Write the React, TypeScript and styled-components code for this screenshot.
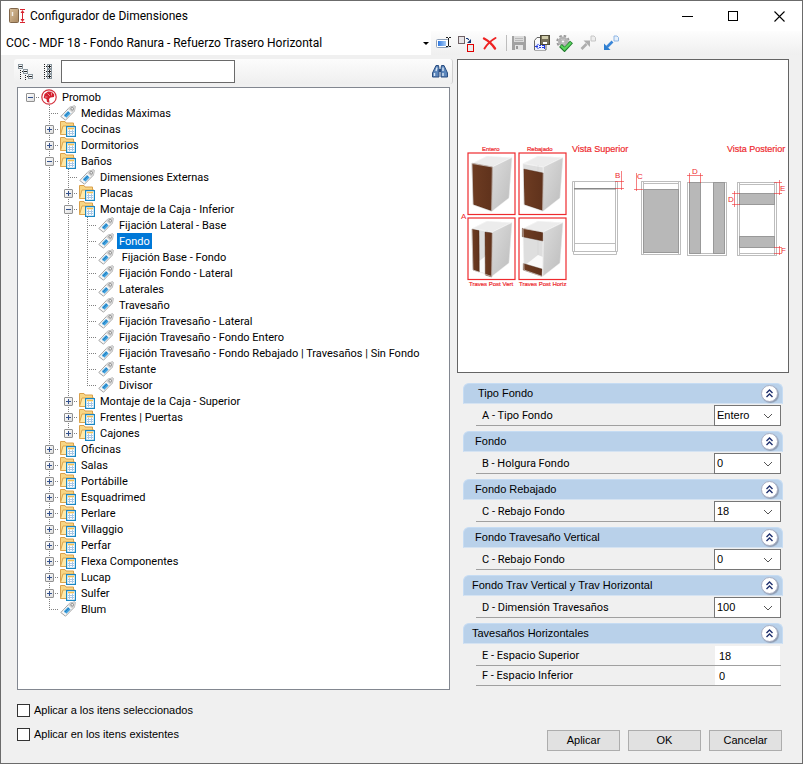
import React, { useState } from 'react';
import styled, { createGlobalStyle, css } from 'styled-components';

const GlobalStyle = createGlobalStyle`
  *, *::before, *::after { box-sizing: border-box; }
  body { margin: 0; background: #f0f0f0; }
  body, button, input, select {
    font-family: "Liberation Sans", Arial, sans-serif;
    font-size: 11px;
    color: #000;
  }
`;

const listFont = 'Roboto, "Liberation Sans", sans-serif';

/* ---------- window ---------- */

const Window = styled.div`
  display: flex;
  flex-direction: column;
  min-height: 100vh;
  border: 1px solid #6b6b6b;
  background: #f0f0f0;
`;

const TitleBar = styled.header`
  display: flex;
  align-items: center;
  height: 30px;
  padding-left: 8px;
  background: #fff;
`;

const Title = styled.h1`
  flex: 1;
  margin: 0 0 0 4px;
  font: 400 12px/20px ${listFont};
  white-space: nowrap;
`;

const CaptionButton = styled.button`
  display: grid;
  place-items: center;
  width: 46px;
  height: 30px;
  padding: 0;
  border: 0;
  background: transparent;
`;

/* ---------- toolbar ---------- */

const Toolbar = styled.div`
  display: flex;
  align-items: center;
  height: 24px;
  background: linear-gradient(#fdfdfd, #efefef);
`;

const ComboWrap = styled.div`
  display: grid;
  grid-template-columns: minmax(0, 1fr) 11px;
  align-items: center;
  flex: 0 1 430px;
  height: 24px;
  background: #fff;
  margin-right: 1px;
`;

const ModelSelect = styled.select`
  grid-area: 1 / 1 / 2 / 3;
  width: 100%;
  height: 24px;
  padding: 0 12px 0 5px;
  border: 0;
  appearance: none;
  background: transparent;
  font: 400 12px/20px ${listFont};
`;

const ComboArrow = styled.span`
  grid-area: 1 / 2;
  justify-self: center;
  border: 3px solid transparent;
  border-top-color: #000;
  border-bottom: 0;
  pointer-events: none;
`;

const ToolButton = styled.button`
  display: grid;
  place-items: center;
  flex: none;
  width: 23px;
  height: 23px;
  padding: 0;
  border: 0;
  background: transparent;
`;

const ToolSeparator = styled.span`
  width: 6px;
  height: 16px;
  border-right: 1px solid #bdbdbd;
`;

/* ---------- content ---------- */

const Content = styled.main`
  flex: 1;
  display: grid;
  grid-template-columns: minmax(0, 433fr) minmax(0, 332fr);
  column-gap: 7px;
  padding: 4px 13px 0 16px;
`;

const LeftColumn = styled.section`
  display: flex;
  flex-direction: column;
`;

const SearchStrip = styled.div`
  display: flex;
  align-items: center;
  height: 25px;
  margin: 0 -3px 3px;
  padding-right: 1px;
  border-right: 1px solid #d0d0d0;
  border-radius: 3px;
  background: linear-gradient(#fcfcfc, #efefef);
`;

const SearchInput = styled.input`
  width: 174px;
  height: 23px;
  margin: 0 auto 0 1px;
  padding: 0 4px;
  border: 1px solid #6a6a6a;
  background: #fff;
`;

const TreeBox = styled.div`
  flex: 1;
  padding: 1px 0 0 3px;
  border: 1px solid #828790;
  background: #fff;
`;

const TreeList = styled.ul`
  margin: 0;
  padding: 0;
  list-style: none;
`;

const TreeRow = styled.div`
  display: flex;
  align-items: center;
  height: 16px;
`;

type Line = 'none' | 'pass' | 'branch' | 'end' | 'root';

const dotsDown = 'repeating-linear-gradient(#808080 0 1px, transparent 1px 2px)';
const dotsAcross = 'repeating-linear-gradient(90deg, #808080 0 1px, transparent 1px 2px)';

const Guide = styled.span<{ $line: Line }>`
  display: grid;
  place-items: center;
  flex: none;
  width: 19px;
  height: 16px;
  background-repeat: no-repeat;
  ${({ $line }) => $line === 'pass' && css`
    background-image: ${dotsDown};
    background-size: 1px 16px;
    background-position: 9px 0;
  `}
  ${({ $line }) => ($line === 'branch' || $line === 'end') && css`
    background-image: ${dotsDown}, ${dotsAcross};
    background-size: 1px ${$line === 'end' ? 9 : 16}px, 11px 1px;
    background-position: 9px 0, 9px 8px;
  `}
  ${({ $line }) => $line === 'root' && css`
    background-image: ${dotsAcross};
    background-size: 10px 1px;
    background-position: 9px 8px;
  `}
`;

const Expander = styled.button`
  display: block;
  width: 9px;
  height: 9px;
  margin-top: 1px;
  padding: 0;
  border: 1px solid #919191;
  border-radius: 1px;
  background: linear-gradient(135deg, #fff, #dedede);
  svg { display: block; }
`;

const NodeIcon = styled.span`
  flex: none;
  width: 20px;
  height: 16px;
  padding-left: 1px;
  svg { display: block; }
`;

const NodeLabel = styled.span<{ $selected: boolean }>`
  padding: 2px 2px 0;
  font-family: ${listFont};
  line-height: 14px;
  white-space: pre;
  color: ${({ $selected }) => ($selected ? '#fff' : '#000')};
  background: ${({ $selected }) => ($selected ? '#0078d7' : 'transparent')};
`;

/* ---------- right side ---------- */

const Preview = styled.figure`
  margin: 0;
  border: 1px solid #646464;
  background: #fff;
  svg { display: block; width: 100%; height: auto; }
`;

const Groups = styled.div`
  display: flex;
  flex-direction: column;
  gap: 5px;
  padding: 10px 6px 0;
`;

const GroupHeader = styled.header`
  display: flex;
  align-items: center;
  justify-content: space-between;
  height: 21px;
  padding: 0 4px 0 8px;
  border: 1px solid #c6dcf3;
  border-bottom-color: #d5e3f2;
  border-radius: 6px 6px 0 0;
  background: #b9d1ea;
`;

const GroupTitle = styled.h2`
  margin: 0;
  padding-bottom: 1px;
  font-size: 11px;
  font-weight: 400;
  line-height: 16px;
  white-space: pre;
`;

const CollapseButton = styled.button<{ $closed: boolean }>`
  display: grid;
  place-items: center;
  width: 17px;
  height: 17px;
  padding: 0;
  border: 1px solid #a9afc4;
  border-radius: 50%;
  background: #fff;
  box-shadow: 1px 1px 1px #8d9bb0;
  svg { transform: ${({ $closed }) => ($closed ? 'rotate(180deg)' : 'none')}; }
`;

const GroupBody = styled.div<{ $list: boolean }>`
  padding: ${({ $list }) => ($list ? 1 : 2)}px 2px 0 13px;
`;

const Field = styled.div`
  display: flex;
  align-items: center;
  border-bottom: 1px solid #a0a0a0;
`;

const FieldLabel = styled.label`
  flex: 1;
  padding: 1px 0 0 6px;
  font-family: ${listFont};
  line-height: 18px;
`;

const FieldSelectWrap = styled.div`
  display: grid;
  grid-template-columns: 1fr 18px;
  align-items: center;
  width: 67px;
  margin-bottom: -1px;
  svg { grid-area: 1 / 2; pointer-events: none; }
`;

const FieldSelect = styled.select`
  grid-area: 1 / 1 / 2 / 3;
  width: 100%;
  height: 21px;
  padding: 0 2px 1px;
  border: 1px solid #767676;
  border-radius: 0;
  appearance: none;
  background: #fff;
`;

const FieldInput = styled.input`
  width: 65px;
  height: 19px;
  margin-right: 1px;
  padding: 0 4px;
  border: 0;
  background: #fff;
`;

/* ---------- footer ---------- */

const Footer = styled.footer`
  display: flex;
  align-items: flex-end;
  justify-content: space-between;
  padding: 8px 20px 12px 16px;
`;

const Checks = styled.div`
  padding-bottom: 5px;
`;

const CheckLabel = styled.label`
  display: flex;
  align-items: center;
  gap: 4px;
  height: 24px;
`;

const CheckBox = styled.input`
  width: 13px;
  height: 13px;
  margin: 0;
  border: 1px solid #333;
  appearance: none;
  background: #fff;
  &:checked { background: #0078d7; }
`;

const Buttons = styled.div`
  display: flex;
  gap: 8px;
`;

const DialogButton = styled.button`
  width: 73px;
  height: 21px;
  padding: 0 0 2px;
  border: 1px solid #adadad;
  background: #e1e1e1;
`;

/* ---------- icons ---------- */

const Icon = ({ children, w = 16, h = 16 }: { children: React.ReactNode; w?: number; h?: number }) => (
  <svg width={w} height={h} viewBox={`0 0 ${w} ${h}`} fill="none" aria-hidden="true">
    {children}
  </svg>
);

const AppIcon = () => (
  <Icon w={17} h={16}>
    <defs>
      <linearGradient id="door" x1="0" x2="1" y1="0" y2="1">
        <stop offset="0" stopColor="#d9c09c" />
        <stop offset="1" stopColor="#a98860" />
      </linearGradient>
    </defs>
    <rect x="0.5" y="0.5" width="9" height="14" rx="1" fill="url(#door)" stroke="#80664a" />
    <path d="M3.5 4v4" stroke="#f3efe8" strokeWidth="1.4" />
    <path d="M11 1.5h5M11 14.5h5M13.5 3v10" stroke="#d8232f" />
    <path d="M11.5 5 13.5 2l2 3zM11.5 11l2 3 2-3z" fill="#d8232f" />
  </Icon>
);

const RenameIcon = () => (
  <Icon>
    <defs>
      <linearGradient id="field" x1="0" x2="1"><stop stopColor="#2f78e0" /><stop offset="1" stopColor="#a6ccf7" /></linearGradient>
    </defs>
    <rect x="0.5" y="4.5" width="12" height="8" rx="1" fill="#fff" stroke="#8ea0b8" />
    <rect x="2" y="6" width="8" height="5" fill="url(#field)" />
    <path d="M10 2.5h2M13 2.5h2M12.5 3v8M10 11.500h2M13 11.500h2" stroke="#222" />
  </Icon>
);

const ReplaceIcon = () => (
  <Icon w={17} h={17}>
    <rect x="0.500" y="1.500" width="6" height="7" fill="#e8e6e8" stroke="#6f6165" />
    <rect x="9.500" y="9.500" width="6" height="7" fill="#ececec" stroke="#e00000" />
    <path d="M8 3.500h2v1h1" stroke="#163a78" />
    <path d="M13 4v4H9z" fill="#163a78" />
  </Icon>
);

const DeleteIcon = () => (
  <Icon>
    <path d="M2 3.500c4 2 8 5.500 11 10" stroke="#ee2222" strokeWidth="2.400" strokeLinecap="round" />
    <path d="M13.500 3C9 5.500 5 9.500 2.500 13.500" stroke="#ee2222" strokeWidth="2" strokeLinecap="round" />
  </Icon>
);

const SaveIcon = () => (
  <Icon>
    <path d="M1 1h13l1 1v13H1z" fill="#a2a2a2" />
    <rect x="3" y="1" width="10" height="6" fill="#dcdcdc" />
    <path d="M4 3.500h8M4 5.500h8" stroke="#b8b8b8" />
    <rect x="4" y="10" width="8" height="5" fill="#e4e4e4" />
    <rect x="5" y="11" width="2" height="3" fill="#999" />
  </Icon>
);

const SaveModelIcon = () => (
  <Icon>
    <path d="M.500 5.500 3 2.500h9v12.500H.500z" fill="#fafafa" stroke="#666" />
    <path d="M1 8h10v7H1z" fill="#eef1fb" />
    <rect x="6.500" y="0.500" width="9" height="9" fill="#77705a" stroke="#4c4835" />
    <rect x="8" y="1" width="6" height="3" fill="#cfcba9" />
    <rect x="9" y="7" width="4" height="2" fill="#fff" />
    <path d="M1 11.500h3M2 11.500 4.500 9M2 11.500 4.500 14M5 10.500h2M5 12.500h2M8 10.500h2M8 12.500h2M10.500 10v4" stroke="#2038e0" />
  </Icon>
);

const GearCheckIcon = () => (
  <Icon w={17} h={17}>
    <circle cx="7" cy="6.500" r="5.700" stroke="#9a9a9a" strokeWidth="2" strokeDasharray="2.500 1.976" />
    <circle cx="7" cy="6.500" r="3.600" fill="#fff" stroke="#b4b4b4" strokeWidth="2.800" />
    <circle cx="7" cy="6.500" r="1.700" fill="#fff" stroke="#8f8f8f" strokeWidth=".800" />
    <path d="m4.500 10.500 4 4L15.500 7" stroke="#1f7a2b" strokeWidth="4" />
    <path d="m5 10.800 3.500 3.300L15 7.500" stroke="#5bd45e" strokeWidth="2.200" />
  </Icon>
);

const ExportIcon = () => (
  <Icon>
    <path d="M1.500 14 6.500 9" stroke="#adadad" strokeWidth="2.600" />
    <path d="M3.500 5.500H10V12z" fill="#adadad" />
    <path d="M11 1h3l1.500 1.500V6H11z" fill="#eee" stroke="#c6c6c6" />
  </Icon>
);

const ImportIcon = () => (
  <Icon>
    <path d="M4 12 9.500 6.500" stroke="#3a86d8" strokeWidth="2.600" />
    <path d="M1 8.500V15h6.500z" fill="#2f7fd0" />
    <path d="M11 1h3l1.500 1.500V6H11z" fill="#e7f1fc" stroke="#8fb6e4" />
  </Icon>
);

const MiniBox = ({ x, y, plus }: { x: number; y: number; plus?: boolean }) => (
  <g>
    <rect x={x + 0.5} y={y + 0.5} width="4" height="4" fill="#f4f7fa" stroke="#8b979f" />
    <path d={`M${x + 1} ${y + 2.5}h3${plus ? `M${x + 2.5} ${y + 1}v3` : ''}`} stroke="#222" />
  </g>
);

const CollapseAllIcon = () => (
  <Icon>
    <path d="M2.500 6v10M7.500 11v5M4 7.500h2M9 12.500h2" stroke="#222" strokeDasharray="1 1" />
    <MiniBox x={0} y={0} />
    <MiniBox x={5} y={5} />
    <MiniBox x={10} y={10} />
  </Icon>
);

const ExpandAllIcon = () => (
  <Icon>
    <path d="M3.500 0v16M5 2.500h2M5 7.500h2M5 12.500h2" stroke="#222" strokeDasharray="1 1" />
    <MiniBox x={6} y={0} plus />
    <MiniBox x={6} y={5} plus />
    <MiniBox x={6} y={10} plus />
  </Icon>
);

const BinocularsIcon = () => (
  <Icon>
    <path d="M4 1.500h2.500l.500 3v8.500H.500V9zM12 1.500H9.500l-.500 3v8.500h6.500V9z" fill="#5c86bb" stroke="#2a4d80" />
    <path d="M7 5h2v3H7z" fill="#2a4d80" />
    <path d="M2.500 9v3M5 3.500 4 7M11 9v3M11 3.500V7" stroke="#dbe8f6" strokeWidth="1.400" />
  </Icon>
);

const PromobIcon = () => (
  <Icon>
    <circle cx="8" cy="8" r="7.200" fill="#fff" stroke="#d4303c" strokeWidth="1.200" />
    <path d="M7 2.500 3.500 5 2.700 9l2.800 1 .5 3 2.500.800L8 10l1.500-1.500L13 8l.300-2.500-2.500-2.800z" fill="#d3202f" />
    <path d="M6.500 4.500 9 7M10.500 3.500v3M4 8h2.500" stroke="#f3b9bd" strokeWidth=".700" />
  </Icon>
);

const TagIcon = () => (
  <Icon>
    <path d="M.800 11.500 9.500 2.300 14.700.800l.500.500L14.500 6 5.500 15.200z" fill="#f7f7f7" stroke="#9a9a9a" strokeWidth=".900" />
    <path d="M9.500 2.300 14.700.800l.500.500L14.500 6l-2 2L8 4z" fill="#d4d4d4" />
    <path d="M3.800 10.300 8 6l2.600 2.500-4.200 4.300z" fill="#3d9fdd" />
    <path d="m4.800 11.200 4.200-4.200" stroke="#2179b8" strokeWidth=".900" />
    <circle cx="12.200" cy="3.800" r="1.300" fill="#fff" stroke="#808080" strokeWidth=".900" />
  </Icon>
);

const FolderIcon = () => (
  <Icon>
    <path d="M.500 13.500V.500h4.500l1 1.500h7.500v4" fill="#f8d684" stroke="#d9a04c" />
    <path d="m.500 13.500 2.500-8.500H15v8.500z" fill="#ffe9a8" stroke="#dba650" />
    <rect x="6.600" y="5.600" width="8.800" height="9.800" fill="#fff" stroke="#1a87c4" strokeWidth="1.200" />
    <path d="M8 7.500h6" stroke="#f5c04f" strokeWidth="1.600" />
    <path d="M8 10.500h6M8 12.500h6M9.500 8.500V14M12.500 8.500V14" stroke="#a9c8e6" />
  </Icon>
);

const ExpanderMark = ({ open }: { open: boolean }) => (
  <Icon w={7} h={7}>
    <path d={open ? 'M1 3.500h5' : 'M1 3.500h5M3.500 1v5'} stroke="#32508c" />
  </Icon>
);

const DoubleChevron = () => (
  <Icon w={9} h={9}>
    <path d="M1.500 4 4.500 1l3 3M1.500 8 4.500 5l3 3" stroke="#1e2f6e" strokeWidth="1.400" />
  </Icon>
);

const ChevronDown = () => (
  <Icon w={10} h={6}>
    <path d="m1 1 4 4 4-4" stroke="#555" />
  </Icon>
);

/* ---------- preview drawing ---------- */

const RED = '#ee2a2e';

const Cabinet = ({ x, y, front }: { x: number; y: number; front: string[] }) => (
  <g transform={`translate(${x} ${y})`}>
    <rect width="47" height="61.500" fill="#fff" stroke={RED} strokeWidth="1.200" />
    <path d="M4 10.500 19 3l25 1.500-3 40L24 58 5 52z" fill="#dedede" />
    <path d="M19 3 44 4.500 24.300 14 4 10.500z" fill="#ececec" stroke="#fff" strokeWidth=".600" />
    <path d="m5 48 14-11 5 2v18L5 52z" fill="#fafafa" />
    <path d="M19 12v25" stroke="#cfcfcf" strokeWidth=".500" />
    <path d="M24.300 14 44 4.500l-3 40.500L23.700 58.500z" fill="url(#cabinetSide)" stroke="#f6f6f6" strokeWidth=".500" />
    {front.map((points) => (
      <polygon key={points} points={points} fill="url(#wood)" stroke="#4a2614" strokeWidth=".400" />
    ))}
    <path d="M4 10.500 24.300 14 23.700 58.500 5 52z" stroke="#eee" strokeWidth=".600" />
  </g>
);

const cabinets = [
  { x: 10, y: 93, front: ['4,10.300 24.500,14 23.700,58 5.300,51.500'] },
  { x: 61, y: 93, front: ['4.700,16 24.300,20 23.700,57.500 5.300,51.500'] },
  { x: 10, y: 158, front: ['4,11 11,12.500 11.300,54 5,52', '17,14 24.300,15 23.700,59 17.300,57'] },
  { x: 61, y: 158, front: ['3.300,10.300 24,14.500 24,23 3.300,18.700', '4.300,45.500 23,51 22.700,58.300 4.300,52'] },
];

const Drawing = () => (
  <svg viewBox="0 0 330 312" fill="none" role="img" aria-label="Vista Superior, Vista Posterior">
    <defs>
      <linearGradient id="cabinetSide" x1="0" x2="1" y1="0" y2="1"><stop stopColor="#dcdcdc" /><stop offset="1" stopColor="#bcbcbc" /></linearGradient>
      <linearGradient id="wood" x1="0" x2="1"><stop stopColor="#6e3c22" /><stop offset="1" stopColor="#5f321c" /></linearGradient>
    </defs>
    {cabinets.map((c) => <Cabinet key={`${c.x}-${c.y}`} {...c} />)}

    <g stroke="#bdbdbd">
      <path d="M114.500 121.500h45v70h-45zM116.500 122v70M157.500 122v70M116.500 183.500h41M115.500 192v2.500h43V192" />
      <path d="M116 128.700h42" stroke="#888" strokeWidth="1.600" />
      <rect x="183.500" y="121.500" width="39" height="73" />
      <path d="M185.500 122v72M220.500 122v72M185.500 123.500h35" />
      <rect x="229.500" y="122.500" width="39" height="73" />
      <path d="M231 193.500h36" />
      <rect x="279.500" y="122.500" width="39" height="73" />
      <path d="M281.500 123v72M316.500 123v72M281.500 124.500h35M281.500 193.500h35" />
    </g>
    <g fill="#b8b8b8" stroke="#999">
      <rect x="185.500" y="129.500" width="35" height="63" />
      <rect x="231.500" y="122.500" width="11" height="71" />
      <rect x="255.500" y="122.500" width="11" height="71" />
      <rect x="281.500" y="133.500" width="35" height="11" />
      <rect x="281.500" y="176.500" width="35" height="11" />
    </g>
    <path
      d="M163.500 111v19M157 121.500h9M157 128.500h9M178.500 113v18M176 129.500h9M229 115.500h16M231.500 113v10M242.500 113v10M321.500 120v15M316 122.500h8M316 133.500h8M276.500 131v16M274 133.500h8M274 144.500h8M321.500 186v9M316 187.500h8M316 193.500h8"
      stroke={RED}
      strokeWidth=".600"
    />
    <g fill={RED} stroke={RED} strokeWidth=".200" fontFamily="Liberation Sans, Arial, sans-serif" fontSize="6">
      <text x="24" y="91">Entero</text>
      <text x="69" y="91">Rebajado</text>
      <text x="11" y="226">Traves Post Vert</text>
      <text x="61" y="226">Traves Post Horiz</text>
      <g fontSize="9">
        <text x="114" y="92">Vista Superior</text>
        <text x="269" y="92">Vista Posterior</text>
      </g>
      <g fontSize="8" strokeWidth="0">
        <text x="3" y="159">A</text>
        <text x="157" y="118">B</text>
        <text x="179" y="119">C</text>
        <text x="234" y="114">D</text>
        <text x="322" y="131">E</text>
        <text x="270" y="142">D</text>
        <text x="323" y="193">F</text>
      </g>
    </g>
  </svg>
);

/* ---------- tree ---------- */

type TreeNode = { label: string; children?: TreeNode[]; closed?: boolean };

const leaf = (label: string): TreeNode => ({ label });
const folder = (label: string): TreeNode => ({ label, children: [], closed: true });

const tree: TreeNode = {
  label: 'Promob',
  children: [
    leaf('Medidas Máximas'),
    folder('Cocinas'),
    folder('Dormitorios'),
    {
      label: 'Baños',
      children: [
        leaf('Dimensiones Externas'),
        folder('Placas'),
        {
          label: 'Montaje de la Caja - Inferior',
          children: [
            'Fijación Lateral - Base',
            'Fondo',
            ' Fijación Base - Fondo',
            'Fijación Fondo - Lateral',
            'Laterales',
            'Travesaño',
            'Fijación Travesaño - Lateral',
            'Fijación Travesaño - Fondo Entero',
            'Fijación Travesaño - Fondo Rebajado | Travesaños | Sin Fondo',
            'Estante',
            'Divisor',
          ].map(leaf),
        },
        folder('Montaje de la Caja - Superior'),
        folder('Frentes | Puertas'),
        folder('Cajones'),
      ],
    },
    ...['Oficinas', 'Salas', 'Portábille', 'Esquadrimed', 'Perlare', 'Villaggio', 'Perfar', 'Flexa Componentes', 'Lucap', 'Sulfer'].map(folder),
    leaf('Blum'),
  ],
};

type NodeProps = {
  node: TreeNode;
  guides: Line[];
  line: Line;
  selected: string;
  onSelect: (label: string) => void;
};

const Node = ({ node, guides, line, selected, onSelect }: NodeProps) => {
  const [open, setOpen] = useState(!node.closed);
  const { label, children } = node;
  const childGuides: Line[] = line === 'root' ? ['none'] : [...guides, line === 'end' ? 'none' : 'pass'];
  const icon = line === 'root' ? <PromobIcon /> : children ? <FolderIcon /> : <TagIcon />;

  return (
    <li role="treeitem" aria-selected={label === selected} aria-expanded={children ? open : undefined}>
      <TreeRow onClick={() => onSelect(label)}>
        {guides.map((g, i) => <Guide key={i} $line={g} />)}
        <Guide $line={line}>
          {children && (
            <Expander type="button" aria-label={`${open ? 'Contraer' : 'Expandir'} ${label}`} onClick={() => setOpen(!open)}>
              <ExpanderMark open={open} />
            </Expander>
          )}
        </Guide>
        <NodeIcon>{icon}</NodeIcon>
        <NodeLabel $selected={label === selected}>{label}</NodeLabel>
      </TreeRow>
      {children && open && (
        <TreeList role="group">
          {children.map((child, i) => (
            <Node
              key={child.label}
              node={child}
              guides={childGuides}
              line={i === children.length - 1 ? 'end' : 'branch'}
              selected={selected}
              onSelect={onSelect}
            />
          ))}
        </TreeList>
      )}
    </li>
  );
};

/* ---------- property groups ---------- */

type FieldData = { label: string; value: string };
type GroupData = { title: string; list: boolean; fields: FieldData[] };

const groups: GroupData[] = [
  { title: '  Tipo Fondo', list: true, fields: [{ label: 'A - Tipo Fondo', value: 'Entero' }] },
  { title: ' Fondo', list: true, fields: [{ label: 'B - Holgura Fondo', value: '0' }] },
  { title: ' Fondo Rebajado', list: true, fields: [{ label: 'C - Rebajo Fondo', value: '18' }] },
  { title: ' Fondo Travesaño Vertical', list: true, fields: [{ label: 'C - Rebajo Fondo', value: '0' }] },
  { title: 'Fondo Trav Vertical y Trav Horizontal', list: true, fields: [{ label: 'D - Dimensión Travesaños', value: '100' }] },
  {
    title: 'Tavesaños Horizontales',
    list: false,
    fields: [
      { label: 'E - Espacio Superior', value: '18' },
      { label: 'F - Espacio Inferior', value: '0' },
    ],
  },
];

const Group = ({ group, index }: { group: GroupData; index: number }) => {
  const [closed, setClosed] = useState(false);
  return (
    <section>
      <GroupHeader>
        <GroupTitle>{group.title}</GroupTitle>
        <CollapseButton type="button" $closed={closed} aria-label="Contraer grupo" onClick={() => setClosed(!closed)}>
          <DoubleChevron />
        </CollapseButton>
      </GroupHeader>
      {!closed && (
        <GroupBody $list={group.list}>
          {group.fields.map((field, i) => {
            const id = `field-${index}-${i}`;
            return (
              <Field key={id}>
                <FieldLabel htmlFor={id}>{field.label}</FieldLabel>
                {group.list ? (
                  <FieldSelectWrap>
                    <FieldSelect id={id} defaultValue={field.value}>
                      <option>{field.value}</option>
                    </FieldSelect>
                    <ChevronDown />
                  </FieldSelectWrap>
                ) : (
                  <FieldInput id={id} defaultValue={field.value} />
                )}
              </Field>
            );
          })}
        </GroupBody>
      )}
    </section>
  );
};

/* ---------- app ---------- */

export default function App() {
  const [selected, setSelected] = useState('Fondo');

  return (
    <>
      <GlobalStyle />
      <Window>
        <TitleBar>
          <AppIcon />
          <Title>Configurador de Dimensiones</Title>
          <CaptionButton type="button" aria-label="Minimizar">
            <Icon w={11} h={11}><path d="M0 5.500h11" stroke="#000" /></Icon>
          </CaptionButton>
          <CaptionButton type="button" aria-label="Maximizar">
            <Icon w={11} h={11}><rect x="0.500" y="0.500" width="9" height="9" stroke="#000" /></Icon>
          </CaptionButton>
          <CaptionButton type="button" aria-label="Cerrar">
            <Icon w={11} h={11}><path d="m.500.500 10 10M10.500.500l-10 10" stroke="#000" strokeWidth="1.100" /></Icon>
          </CaptionButton>
        </TitleBar>

        <Toolbar role="toolbar">
          <ComboWrap>
            <ModelSelect aria-label="Modelo">
              <option>COC - MDF 18 - Fondo Ranura - Refuerzo Trasero Horizontal</option>
            </ModelSelect>
            <ComboArrow />
          </ComboWrap>
          <ToolButton type="button" aria-label="Renombrar"><RenameIcon /></ToolButton>
          <ToolButton type="button" aria-label="Duplicar"><ReplaceIcon /></ToolButton>
          <ToolButton type="button" aria-label="Eliminar"><DeleteIcon /></ToolButton>
          <ToolSeparator />
          <ToolButton type="button" aria-label="Guardar" disabled><SaveIcon /></ToolButton>
          <ToolButton type="button" aria-label="Guardar modelo"><SaveModelIcon /></ToolButton>
          <ToolButton type="button" aria-label="Validar"><GearCheckIcon /></ToolButton>
          <ToolButton type="button" aria-label="Exportar" disabled><ExportIcon /></ToolButton>
          <ToolButton type="button" aria-label="Importar"><ImportIcon /></ToolButton>
        </Toolbar>

        <Content>
          <LeftColumn>
            <SearchStrip>
              <ToolButton type="button" aria-label="Contraer todo"><CollapseAllIcon /></ToolButton>
              <ToolButton type="button" aria-label="Expandir todo"><ExpandAllIcon /></ToolButton>
              <SearchInput type="text" aria-label="Buscar" />
              <ToolButton type="button" aria-label="Buscar siguiente"><BinocularsIcon /></ToolButton>
            </SearchStrip>
            <TreeBox>
              <TreeList role="tree">
                <Node node={tree} guides={[]} line="root" selected={selected} onSelect={setSelected} />
              </TreeList>
            </TreeBox>
          </LeftColumn>

          <section>
            <Preview><Drawing /></Preview>
            <Groups>
              {groups.map((group, i) => <Group key={group.title} group={group} index={i} />)}
            </Groups>
          </section>
        </Content>

        <Footer>
          <Checks>
            <CheckLabel><CheckBox type="checkbox" />Aplicar a los itens seleccionados</CheckLabel>
            <CheckLabel><CheckBox type="checkbox" />Aplicar en los itens existentes</CheckLabel>
          </Checks>
          <Buttons>
            <DialogButton type="button">Aplicar</DialogButton>
            <DialogButton type="button">OK</DialogButton>
            <DialogButton type="button">Cancelar</DialogButton>
          </Buttons>
        </Footer>
      </Window>
    </>
  );
}
